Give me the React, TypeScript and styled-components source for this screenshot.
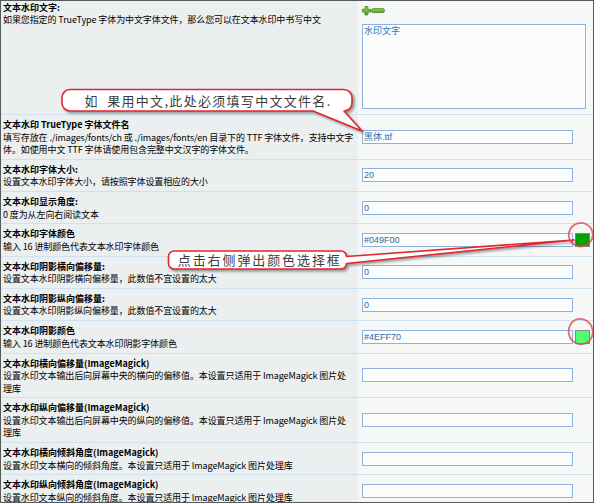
import React from "react";
import styled, { createGlobalStyle } from "styled-components";

const GlobalStyle = createGlobalStyle`
  html, body {
    margin: 0;
    padding: 0;
    background: #ffffff;
  }
`;

const Frame = styled.div`
  position: relative;
  box-sizing: border-box;
  width: 594px;
  height: 503px;
  overflow: hidden;
  border: 1px solid #555a5c;
  background: #f6f8f7;
  font-family: "Noto Sans CJK SC", "Liberation Sans", sans-serif;
  font-size: 9px;
  line-height: 12.5px;
  color: #000;
`;

const Row = styled.div`
  display: grid;
  grid-template-columns: 357px 1fr;
  border-bottom: 1px solid #cfe0ee;
`;

const Label = styled.div<{ $first?: boolean }>`
  background: #eceff0;
  padding: ${(p) => (p.$first ? "0.5px 2px 0" : "4px 2px 2.3px")};
`;

const Title = styled.div`
  font-weight: 700;
  white-space: nowrap;
`;

const Desc = styled.div`
  white-space: nowrap;
  letter-spacing: -0.1px;
`;

const Field = styled.div`
  display: flex;
  align-items: center;
  padding-left: 4px;
`;

const FieldStack = styled.div`
  display: flex;
  flex-direction: column;
  align-items: flex-start;
  gap: 8px;
  padding: 5px 0 5px 4px;
`;

const TextInput = styled.input`
  box-sizing: border-box;
  width: 211px;
  height: 14px;
  margin: 0;
  padding: 0 1px;
  border: 1px solid #8fb1dd;
  background: #fbfcfc;
  font-family: "Liberation Sans", "Noto Sans CJK SC", sans-serif;
  font-size: 9px;
  color: #2f6aa8;
  outline: none;
`;

const TextArea = styled.textarea`
  box-sizing: border-box;
  width: 224px;
  height: 85px;
  margin: 0;
  padding: 0 1px;
  border: 1px solid #8fb1dd;
  background: #fbfcfc;
  font-family: "Noto Sans CJK SC", "Liberation Sans", sans-serif;
  font-size: 9px;
  line-height: 12px;
  color: #2f72b4;
  resize: none;
  outline: none;
`;

const Swatch = styled.span<{ $color: string }>`
  box-sizing: border-box;
  width: 15px;
  height: 14px;
  margin-left: 2px;
  border: 1px solid #7e8b82;
  background: ${(p) => p.$color};
`;

const AddRemove = styled.svg`
  display: block;
  width: 23px;
  height: 10px;
`;

/* annotation layer drawn over the form */
const Notes = styled.div`
  position: absolute;
  left: -1px;
  top: -1px;
  width: 594px;
  height: 503px;
  pointer-events: none;
`;

const NotesCanvas = styled.svg`
  position: absolute;
  left: 0;
  top: 0;
  width: 594px;
  height: 503px;
`;

const Bubble = styled.path`
  fill: #ffffff;
  stroke: #e2262c;
  stroke-width: 1.6;
  stroke-linejoin: round;
  filter: drop-shadow(2px 2px 1.2px rgba(0, 0, 0, 0.35));
`;

const Ring = styled.ellipse`
  fill: none;
  stroke: rgba(226, 70, 80, 0.8);
  stroke-width: 1.8;
`;

const NoteText = styled.span<{ $x: number; $y: number; $spacing: number }>`
  position: absolute;
  left: ${(p) => p.$x}px;
  top: ${(p) => p.$y}px;
  font-family: "Noto Sans CJK SC", sans-serif;
  font-size: 13px;
  line-height: 13px;
  letter-spacing: ${(p) => p.$spacing}px;
  color: #3d3d3d;
  white-space: pre;
`;

type Setting = {
  title: string;
  lines: string[];
  value: string;
  swatch?: string;
};

const settings: Setting[] = [
  {
    title: "文本水印 TrueType 字体文件名",
    lines: [
      "填写存放在 ./images/fonts/ch 或 ./images/fonts/en 目录下的 TTF 字体文件，支持中文字",
      "体。如使用中文 TTF 字体请使用包含完整中文汉字的字体文件。",
    ],
    value: "黑体.ttf",
  },
  {
    title: "文本水印字体大小:",
    lines: ["设置文本水印字体大小，请按照字体设置相应的大小"],
    value: "20",
  },
  {
    title: "文本水印显示角度:",
    lines: ["0 度为从左向右阅读文本"],
    value: "0",
  },
  {
    title: "文本水印字体颜色",
    lines: ["输入 16 进制颜色代表文本水印字体颜色"],
    value: "#049F00",
    swatch: "#049F00",
  },
  {
    title: "文本水印阴影横向偏移量:",
    lines: ["设置文本水印阴影横向偏移量，此数值不宜设置的太大"],
    value: "0",
  },
  {
    title: "文本水印阴影纵向偏移量:",
    lines: ["设置文本水印阴影纵向偏移量，此数值不宜设置的太大"],
    value: "0",
  },
  {
    title: "文本水印阴影颜色",
    lines: ["输入 16 进制颜色代表文本水印阴影字体颜色"],
    value: "#4EFF70",
    swatch: "#4EFF70",
  },
  {
    title: "文本水印横向偏移量(ImageMagick)",
    lines: [
      "设置水印文本输出后向屏幕中央的横向的偏移值。本设置只适用于 ImageMagick 图片处",
      "理库",
    ],
    value: "",
  },
  {
    title: "文本水印纵向偏移量(ImageMagick)",
    lines: [
      "设置水印文本输出后向屏幕中央的纵向的偏移值。本设置只适用于 ImageMagick 图片处",
      "理库",
    ],
    value: "",
  },
  {
    title: "文本水印横向倾斜角度(ImageMagick)",
    lines: ["设置水印文本横向的倾斜角度。本设置只适用于 ImageMagick 图片处理库"],
    value: "",
  },
  {
    title: "文本水印纵向倾斜角度(ImageMagick)",
    lines: ["设置水印文本纵向的倾斜角度。本设置只适用于 ImageMagick 图片处理库"],
    value: "",
  },
];

function AddRemoveIcons() {
  return (
    <AddRemove viewBox="0 0 23 10">
      <defs>
        <linearGradient id="leaf" x1="0" y1="0" x2="0" y2="1">
          <stop offset="0" stopColor="#9fd45a" />
          <stop offset="1" stopColor="#4f9e22" />
        </linearGradient>
      </defs>
      <path
        d="M3 0.5h2.8v2.8h2.8v2.8h-2.8v2.8h-2.8v-2.8h-2.8v-2.8h2.8z"
        fill="url(#leaf)"
        stroke="#47891f"
        strokeWidth="0.9"
      />
      <rect x="9.6" y="2.6" width="12.8" height="4" rx="1.6" fill="url(#leaf)" stroke="#47891f" strokeWidth="0.8" />
    </AddRemove>
  );
}

function Annotations() {
  return (
    <Notes>
      <NotesCanvas viewBox="0 0 594 503">
        <Bubble d="M70 89.5 H344 A8 8 0 0 1 352 97.5 V103 A8 8 0 0 1 344 111 H344 L362 131 L313 111 H70 A8 8 0 0 1 62 103 V97.5 A8 8 0 0 1 70 89.5 Z" />
        <Bubble d="M174 251 H341 A5.5 5.5 0 0 1 346.5 256.5 L574 240 L346.5 263.5 A5.5 5.5 0 0 1 341 269 H174 A5.5 5.5 0 0 1 168.5 263.5 V256.5 A5.5 5.5 0 0 1 174 251 Z" />
        <Ring cx="580.8" cy="234.8" rx="12" ry="11.8" transform="rotate(-15 580.8 234.8)" />
        <Ring cx="580.7" cy="331.6" rx="12" ry="12.8" transform="rotate(-15 580.7 331.6)" />
      </NotesCanvas>
      <NoteText $x={84.5} $y={93.5} $spacing={1.3}>
        {"如  果用中文,此处必须填写中文文件名."}
      </NoteText>
      <NoteText $x={177.8} $y={252.8} $spacing={1.9}>
        点击右侧弹出颜色选择框
      </NoteText>
    </Notes>
  );
}

export default function App() {
  return (
    <>
      <GlobalStyle />
      <Frame>
        <Row>
          <Label $first>
            <Title>文本水印文字:</Title>
            <Desc>如果您指定的 TrueType 字体为中文字体文件，那么您可以在文本水印中书写中文</Desc>
          </Label>
          <FieldStack>
            <AddRemoveIcons />
            <TextArea defaultValue="水印文字" />
          </FieldStack>
        </Row>
        {settings.map((s) => (
          <Row key={s.title}>
            <Label>
              <Title>{s.title}</Title>
              {s.lines.map((line) => (
                <Desc key={line}>{line}</Desc>
              ))}
            </Label>
            <Field>
              <TextInput defaultValue={s.value} />
              {s.swatch && <Swatch $color={s.swatch} />}
            </Field>
          </Row>
        ))}
        <Annotations />
      </Frame>
    </>
  );
}
